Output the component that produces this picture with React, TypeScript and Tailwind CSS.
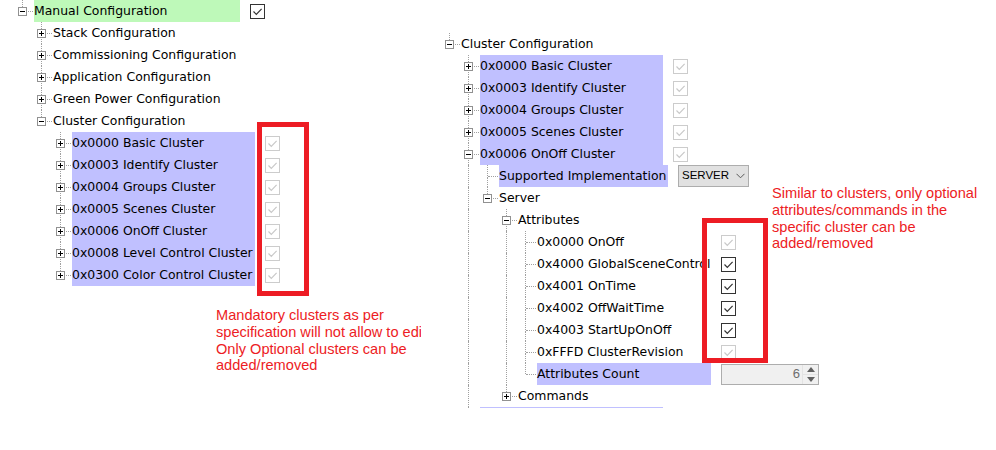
import React from 'react';

type TreeNode = {
  label: string;
  expanded?: boolean;
  children?: TreeNode[];
  labelClass?: string;
  control?: React.ReactNode;
};

type Row = {
  node: TreeNode;
  guides: boolean[];
  hasNext: boolean;
};

// walk the visible part of the tree and remember which guide lines pass through each row
function flatten(nodes: TreeNode[], guides: boolean[] = []): Row[] {
  const rows: Row[] = [];
  nodes.forEach((node, i) => {
    const hasNext = i < nodes.length - 1;
    rows.push({ node, guides, hasNext });
    if (node.expanded && node.children) {
      rows.push(...flatten(node.children, [...guides, hasNext]));
    }
  });
  return rows;
}

function Check({ disabled = false }: { disabled?: boolean }) {
  return (
    <span
      className={`flex h-[15px] w-[15px] shrink-0 items-center justify-center border bg-white ${
        disabled ? 'border-[#cccccc]' : 'border-[#333333]'
      }`}
    >
      <svg width="11" height="11" viewBox="0 0 11 11">
        <path
          d="M1.5 5.5 L4.3 8.3 L9.6 2.8"
          fill="none"
          stroke={disabled ? '#c9c9c9' : '#333333'}
          strokeWidth="1.2"
        />
      </svg>
    </span>
  );
}

function Dropdown({ value }: { value: string }) {
  return (
    <span className="flex h-[22px] w-[71px] items-center justify-between border border-[#adadad] bg-[#e1e1e1] pl-[3px] pr-[3px] font-['Liberation_Sans',sans-serif] text-[11.5px] text-black">
      {value}
      <svg width="9" height="6" viewBox="0 0 9 6">
        <path d="M0.5 0.8 L4.5 4.8 L8.5 0.8" fill="none" stroke="#5a5a5a" strokeWidth="1" />
      </svg>
    </span>
  );
}

function Spinner({ value }: { value: number }) {
  return (
    <span className="flex h-[21px] w-[98px] items-stretch border border-[#adadad] bg-[#f0f0f0]">
      <span className="flex flex-1 items-center justify-end pr-[2px] font-['Liberation_Sans',sans-serif] text-[13px] text-[#6d6d6d]">
        {value}
      </span>
      <span className="flex w-[16px] flex-col border-l border-[#e3e3e3]">
        <span className="flex flex-1 items-center justify-center border-b border-[#e3e3e3]">
          <svg width="8" height="5" viewBox="0 0 8 5">
            <path d="M0 5 L4 0 L8 5 Z" fill="#606060" />
          </svg>
        </span>
        <span className="flex flex-1 items-center justify-center">
          <svg width="8" height="5" viewBox="0 0 8 5">
            <path d="M0 0 L4 5 L8 0 Z" fill="#606060" />
          </svg>
        </span>
      </span>
    </span>
  );
}

function Expander({ open }: { open: boolean }) {
  return (
    <span className="absolute left-[5px] top-[7px] h-[9px] w-[9px] border border-[#919191] bg-white">
      <span className="absolute left-[1px] top-[3px] h-px w-[5px] bg-black" />
      {!open && <span className="absolute left-[3px] top-[1px] h-[5px] w-px bg-black" />}
    </span>
  );
}

function Tree({ nodes }: { nodes: TreeNode[] }) {
  const rows = flatten(nodes);
  return (
    <div className="flex flex-col font-['DejaVu_Sans',sans-serif] text-[12.45px] text-black">
      {rows.map((r, i) => (
        <div key={i} className="flex h-[22px] items-center">
          {r.guides.map((g, j) => (
            <span key={j} className="relative h-full w-[19px] shrink-0">
              {g && (
                <span className="absolute left-[9px] top-0 h-full border-l border-dotted border-[#a0a0a0]" />
              )}
            </span>
          ))}
          <span className="relative h-full w-[19px] shrink-0">
            <span className="absolute left-[9px] top-0 h-[11px] border-l border-dotted border-[#a0a0a0]" />
            {r.hasNext && (
              <span className="absolute bottom-0 left-[9px] top-[12px] border-l border-dotted border-[#a0a0a0]" />
            )}
            <span className="absolute left-[10px] top-[11px] w-[10px] border-t border-dotted border-[#a0a0a0]" />
            {r.node.children && <Expander open={!!r.node.expanded} />}
          </span>
          <span
            className={`ml-[2px] flex h-full shrink-0 items-center whitespace-nowrap pt-px ${r.node.labelClass ?? ''}`}
          >
            {r.node.label}
          </span>
          {r.node.control && <span className="ml-[10px] flex items-center">{r.node.control}</span>}
        </div>
      ))}
    </div>
  );
}

const CLUSTER_BG = 'w-[183px] bg-[#c0c0ff]';
const ATTR_W = 'w-[174px]';

const mandatoryClusters = [
  '0x0000 Basic Cluster',
  '0x0003 Identify Cluster',
  '0x0004 Groups Cluster',
  '0x0005 Scenes Cluster',
  '0x0006 OnOff Cluster',
  '0x0008 Level Control Cluster',
  '0x0300 Color Control Cluster',
];

const leftTree: TreeNode[] = [
  {
    label: 'Manual Configuration',
    expanded: true,
    labelClass: 'w-[206px] bg-[#bef9b9]',
    control: <Check />,
    children: [
      { label: 'Stack Configuration', children: [] },
      { label: 'Commissioning Configuration', children: [] },
      { label: 'Application Configuration', children: [] },
      { label: 'Green Power Configuration', children: [] },
      {
        label: 'Cluster Configuration',
        expanded: true,
        children: mandatoryClusters.map((c) => ({
          label: c,
          children: [],
          labelClass: CLUSTER_BG,
          control: <Check disabled />,
        })),
      },
    ],
  },
];

const collapsedCluster = (label: string): TreeNode => ({
  label,
  children: [],
  labelClass: CLUSTER_BG,
  control: <Check disabled />,
});

const rightTree: TreeNode[] = [
  {
    label: 'Cluster Configuration',
    expanded: true,
    children: [
      collapsedCluster('0x0000 Basic Cluster'),
      collapsedCluster('0x0003 Identify Cluster'),
      collapsedCluster('0x0004 Groups Cluster'),
      collapsedCluster('0x0005 Scenes Cluster'),
      {
        label: '0x0006 OnOff Cluster',
        expanded: true,
        labelClass: CLUSTER_BG,
        control: <Check disabled />,
        children: [
          {
            label: 'Supported Implementation',
            labelClass: 'w-[169px] bg-[#c0c0ff]',
            control: <Dropdown value="SERVER" />,
          },
          {
            label: 'Server',
            expanded: true,
            children: [
              {
                label: 'Attributes',
                expanded: true,
                children: [
                  { label: '0x0000 OnOff', labelClass: ATTR_W, control: <Check disabled /> },
                  { label: '0x4000 GlobalSceneControl', labelClass: ATTR_W, control: <Check /> },
                  { label: '0x4001 OnTime', labelClass: ATTR_W, control: <Check /> },
                  { label: '0x4002 OffWaitTime', labelClass: ATTR_W, control: <Check /> },
                  { label: '0x4003 StartUpOnOff', labelClass: ATTR_W, control: <Check /> },
                  { label: '0xFFFD ClusterRevision', labelClass: ATTR_W, control: <Check disabled /> },
                  {
                    label: 'Attributes Count',
                    labelClass: 'w-[174px] bg-[#c0c0ff]',
                    control: <Spinner value={6} />,
                  },
                ],
              },
              { label: 'Commands', children: [] },
            ],
          },
        ],
      },
      collapsedCluster('0x0008 Level Control Cluster'),
      collapsedCluster('0x0300 Color Control Cluster'),
    ],
  },
];

export default function App() {
  return (
    <div className="relative flex h-[450px] w-[996px] overflow-hidden bg-white">
      {/* left: the whole manual configuration */}
      <div className="w-[440px] shrink-0 pl-[13px]">
        <Tree nodes={leftTree} />
        <div className="ml-[203px] mt-[21px] w-[205px] overflow-hidden whitespace-nowrap font-['Liberation_Sans',Arial,sans-serif] text-[14.6px] leading-[16.8px] text-[#ed1c24]">
          <div>Mandatory clusters as per</div>
          <div>specification will not allow to edit</div>
          <div>Only Optional clusters can be</div>
          <div>added/removed</div>
        </div>
      </div>

      {/* right: OnOff cluster expanded, clipped by the panel */}
      <div className="mt-[33px] h-[375px] flex-1 overflow-hidden">
        <Tree nodes={rightTree} />
      </div>

      {/* annotations */}
      <div className="absolute left-[257px] top-[122px] h-[174px] w-[52px] border-[5px] border-[#ed1c24]" />
      <div className="absolute left-[702px] top-[218px] h-[145px] w-[66px] border-[5px] border-[#ed1c24]" />
      <div className="absolute left-[772px] top-[185px] whitespace-nowrap font-['Liberation_Sans',Arial,sans-serif] text-[14.6px] leading-[16.8px] text-[#ed1c24]">
        <div>Similar to clusters, only optional</div>
        <div>attributes/commands in the</div>
        <div>specific cluster can be</div>
        <div>added/removed</div>
      </div>
    </div>
  );
}
